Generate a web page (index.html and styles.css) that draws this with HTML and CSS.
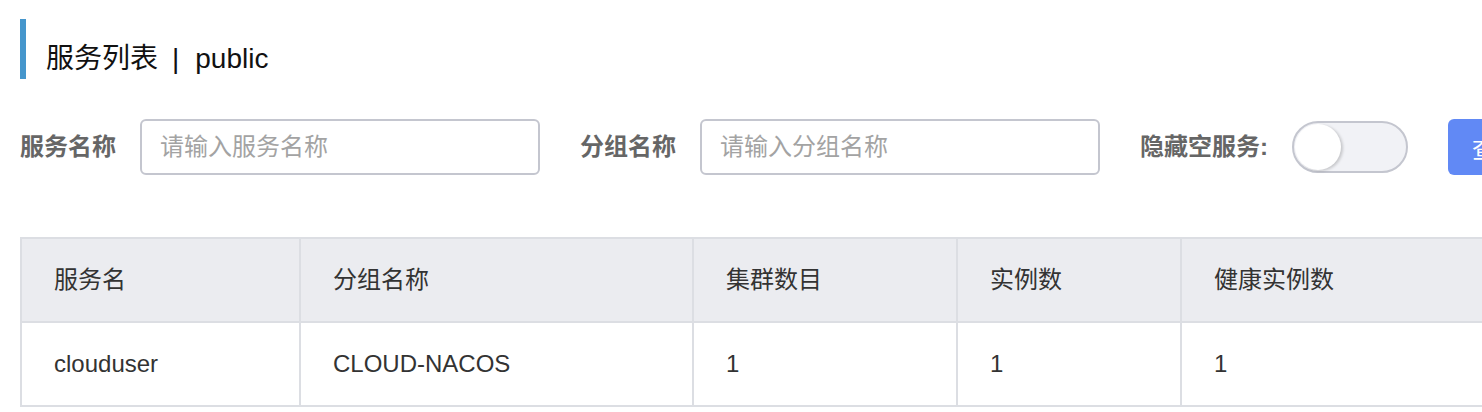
FILE: index.html
```html
<!DOCTYPE html>
<html lang="zh-CN">
<head>
<meta charset="utf-8">
<title>服务列表</title>
<link rel="stylesheet" href="styles.css">
</head>
<body>
<div class="page">
  <div class="page-title"><span>服务列表</span><span class="sep">|</span><span>public</span></div>

  <div class="filters">
    <label class="field-label">服务名称</label>
    <input class="text-input" type="text" placeholder="请输入服务名称">
    <label class="field-label gap">分组名称</label>
    <input class="text-input" type="text" placeholder="请输入分组名称">
    <label class="field-label gap">隐藏空服务:</label>
    <span class="switch"><span class="knob"></span></span>
    <button class="btn-primary" type="button">查询</button>
  </div>

  <table class="grid">
    <colgroup>
      <col class="c1"><col class="c2"><col class="c3"><col class="c4"><col class="c5">
    </colgroup>
    <thead>
      <tr><th>服务名</th><th>分组名称</th><th>集群数目</th><th>实例数</th><th>健康实例数</th></tr>
    </thead>
    <tbody>
      <tr><td>clouduser</td><td>CLOUD-NACOS</td><td>1</td><td>1</td><td>1</td></tr>
    </tbody>
  </table>
</div>
</body>
</html>
```

FILE: styles.css
```css
html, body {
  margin: 0;
  padding: 0;
  background: #ffffff;
  overflow: hidden;
}

body {
  font-family: "Liberation Sans", "Noto Sans CJK SC", sans-serif;
  color: #333333;
}

.page {
  padding: 19px 0 0 20px;
  width: 1700px;
}

.page-title {
  height: 60px;
  box-sizing: border-box;
  border-left: 6px solid #4596cc;
  padding: 25px 0 0 20px;
  font-size: 28px;
  line-height: 30px;
  color: #111111;
  white-space: nowrap;
}

.page-title .sep {
  margin: 0 16px 0 14px;
}

.filters {
  display: flex;
  align-items: center;
  margin-top: 40px;
  height: 56px;
  white-space: nowrap;
}

.field-label {
  font-size: 24px;
  font-weight: bold;
  color: #666666;
  line-height: 30px;
  margin-right: 24px;
  flex-shrink: 0;
}

.field-label.gap {
  margin-left: 40px;
}

.text-input {
  width: 400px;
  height: 56px;
  box-sizing: border-box;
  border: 2px solid #c4c6cf;
  border-radius: 6px;
  padding: 0 18px;
  font-family: inherit;
  font-size: 24px;
  color: #333333;
  background: #ffffff;
  outline: none;
  flex-shrink: 0;
}

.text-input::placeholder {
  color: #a3a3a3;
}

.switch {
  display: flex;
  align-items: center;
  width: 116px;
  height: 52px;
  box-sizing: border-box;
  border: 2px solid #c4c6cf;
  border-radius: 26px;
  background: #f1f2f6;
  padding: 0 1px;
  flex-shrink: 0;
}

.knob {
  width: 46px;
  height: 46px;
  border-radius: 50%;
  background: #ffffff;
  box-shadow: 2px 1px 3px rgba(0, 0, 0, 0.18);
}

.btn-primary {
  margin-left: 40px;
  height: 56px;
  padding: 0 24px;
  border: none;
  border-radius: 6px;
  background: #6189f5;
  color: #ffffff;
  font-family: inherit;
  font-size: 24px;
  flex-shrink: 0;
}

.grid {
  margin-top: 62px;
  border-collapse: collapse;
  table-layout: fixed;
  width: 1600px;
  font-size: 24px;
  color: #333333;
}

.grid .c1 { width: 279px; }
.grid .c2 { width: 393px; }
.grid .c3 { width: 264px; }
.grid .c4 { width: 224px; }

.grid th,
.grid td {
  border: 2px solid #dcdee3;
  padding: 0 0 0 32px;
  text-align: left;
  font-weight: normal;
  line-height: 30px;
  white-space: nowrap;
}

.grid th {
  background: #ebecf0;
  height: 82px;
}

.grid td {
  height: 82px;
}
```
